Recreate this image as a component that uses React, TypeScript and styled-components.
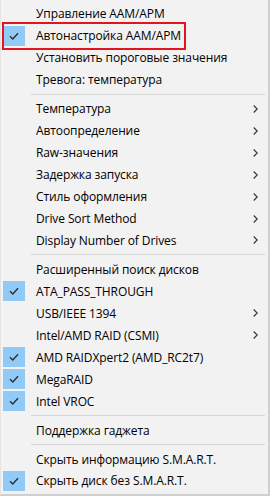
import styled, { createGlobalStyle } from 'styled-components';

const GlobalStyle = createGlobalStyle`
   html, body {
      margin: 0;
      padding: 0;
      background: #f2f2f2;
   }
   * {
      box-sizing: border-box;
   }
`;

const Menu = styled.div`
   width: 270px;
   height: 496px;
   padding: 3px 0 2px 0;
   background-color: #f2f2f2;
   border-right: 2px solid #cfcfcf;
   border-bottom: 2px solid #cfcfcf;
   border-left: 1px solid #e4e4e4;
   display: flex;
   flex-direction: column;
   font-family: 'Open Sans', 'Noto Sans', sans-serif;
   font-size: 12px;
   color: #000;
`;

const Row = styled.div`
   position: relative;
   height: 22px;
   display: flex;
   align-items: center;
   padding-left: 2px;
   padding-right: 10px;
`;

const CheckBox = styled.div<{ $on: boolean }>`
   width: 22px;
   height: 20px;
   display: flex;
   align-items: center;
   justify-content: center;
   background-color: ${props => (props.$on ? '#91c9f7' : 'transparent')};
`;

const Label = styled.span`
   flex: 1;
   margin-left: 11px;
   white-space: nowrap;
   letter-spacing: -0.1px;
`;

const Separator = styled.div`
   height: 7px;
   display: flex;
   align-items: center;
   padding-left: 30px;
   padding-right: 3px;

   &::after {
      content: '';
      flex: 1;
      height: 1px;
      background-color: #d7d7d7;
   }
`;

const Callout = styled.div`
   position: absolute;
   left: 1px;
   top: -3px;
   width: 184px;
   height: 28px;
   border: 2px solid #e3141c;
   pointer-events: none;
`;

const Check = () => (
   <svg width='10' height='8' viewBox='0 0 10 8'>
      <path d='M1 4.2 L3.8 7 L9 1.2' fill='none' stroke='#2b2b2b' strokeWidth='1.3' />
   </svg>
);

const Chevron = () => (
   <svg width='5' height='8' viewBox='0 0 5 8'>
      <path d='M0.7 0.5 L4.2 4 L0.7 7.5' fill='none' stroke='#333' strokeWidth='1.1' />
   </svg>
);

type Item = { label: string; checked?: boolean; sub?: boolean; marked?: boolean } | 'sep';

const items: Item[] = [
   { label: 'Управление AAM/APM' },
   { label: 'Автонастройка AAM/APM', checked: true, marked: true },
   { label: 'Установить пороговые значения' },
   { label: 'Тревога: температура' },
   'sep',
   { label: 'Температура', sub: true },
   { label: 'Автоопределение', sub: true },
   { label: 'Raw-значения', sub: true },
   { label: 'Задержка запуска', sub: true },
   { label: 'Стиль оформления', sub: true },
   { label: 'Drive Sort Method', sub: true },
   { label: 'Display Number of Drives', sub: true },
   'sep',
   { label: 'Расширенный поиск дисков' },
   { label: 'ATA_PASS_THROUGH', checked: true },
   { label: 'USB/IEEE 1394', sub: true },
   { label: 'Intel/AMD RAID (CSMI)', sub: true },
   { label: 'AMD RAIDXpert2 (AMD_RC2t7)', checked: true },
   { label: 'MegaRAID', checked: true },
   { label: 'Intel VROC', checked: true },
   'sep',
   { label: 'Поддержка гаджета' },
   'sep',
   { label: 'Скрыть информацию S.M.A.R.T.' },
   { label: 'Скрыть диск без S.M.A.R.T.', checked: true },
];

const App = () => (
   <>
      <GlobalStyle />
      <Menu>
         {items.map((item, i) =>
            item === 'sep' ? (
               <Separator key={i} />
            ) : (
               <Row key={i}>
                  <CheckBox $on={!!item.checked}>{item.checked && <Check />}</CheckBox>
                  <Label>{item.label}</Label>
                  {item.sub && <Chevron />}
                  {item.marked && <Callout />}
               </Row>
            ),
         )}
      </Menu>
   </>
);

export default App;
